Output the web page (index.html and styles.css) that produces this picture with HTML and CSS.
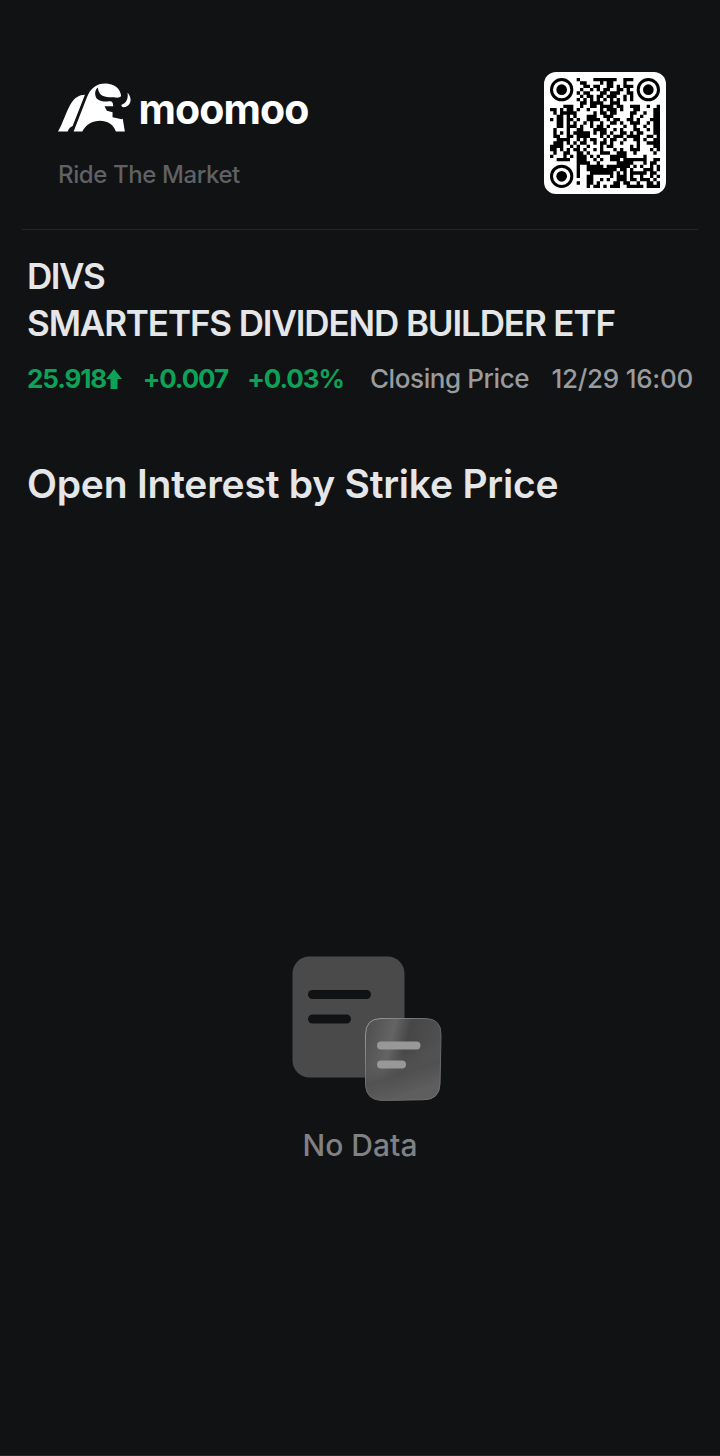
FILE: index.html
```html
<!DOCTYPE html>
<html lang="en">
<head>
    <meta charset="UTF-8" />
    <meta name="viewport" content="width=device-width, initial-scale=1.0" />
    <title>DIVS - Open Interest by Strike Price</title>
    <link rel="stylesheet" href="styles.css">
</head>
<body>
    <div class="share-page">
        <header class="header">
            <div class="brand">
                <div class="logo">
                    <svg class="bull" viewBox="24 24 221 147">
                        <path d="M24 170 C39 145 47 112 64 84 C74 68 88 59 105 59 L68 153 C60 156 56 162 53 170 Z" />
                        <path d="M71 170 L111 67 C121 39 141 25 166 25 C193 25 212 40 214 64 L214 128 L219 133 L225 170 L198 170 C186 126 116 126 97 170 Z" />
                        <path class="cut" d="M144 37 C134 45 133 60 141 71 C149 79 165 80 181 79 C187 79 190 84 190 94 L164 94 L171 107 L188 112 L188 127 L216 133 L221 98 L232 60 L217 52 C216 64 211 68 202 68 C190 65 173 69 160 63 C149 58 145 48 144 37 Z" />
                        <path d="M233 53 C241 61 246 76 239 86 C235 93 229 96 220 97 C215 94 214 92 215 89 C230 84 236 70 233 53 Z" />
                    </svg>
                    <span class="wordmark">moomoo</span>
                </div>
                <div class="slogan">Ride The Market</div>
            </div>
            <div class="qr">
                <svg viewBox="0 0 33 33">
                    <path id="qrModules" />
                    <g class="finder">
                        <circle cx="3.5" cy="3.5" r="3.05" />
                        <circle cx="29.5" cy="3.5" r="3.05" />
                        <circle cx="3.5" cy="29.5" r="3.05" />
                    </g>
                    <circle cx="3.5" cy="3.5" r="1.6" />
                    <circle cx="29.5" cy="3.5" r="1.6" />
                    <circle cx="3.5" cy="29.5" r="1.6" />
                </svg>
            </div>
        </header>

        <section class="quote">
            <div class="name symbol">DIVS</div>
            <div class="name">SMARTETFS DIVIDEND BUILDER ETF</div>
            <div class="price-row">
                <div class="price">
                    <span class="last">25.918</span>
                    <svg class="arrow" viewBox="0 0 16 20"><path d="M8 0 L16 10 H11.500 V20 H4.500 V10 H0 Z" /></svg>
                </div>
                <span class="change">+0.007</span>
                <span class="percent">+0.03%</span>
                <span class="status">Closing Price</span>
                <span class="time">12/29 16:00</span>
            </div>
        </section>

        <h1 class="title">Open Interest by Strike Price</h1>

        <div class="empty">
            <svg class="empty-icon" viewBox="0 0 150 146">
                <defs>
                    <linearGradient id="card" x1="0" y1="0" x2="1" y2="0.25">
                        <stop offset="0" stop-color="#4e4e4e" />
                        <stop offset="0.38" stop-color="#646464" />
                        <stop offset="0.58" stop-color="#474747" />
                        <stop offset="1" stop-color="#505050" />
                    </linearGradient>
                    <linearGradient id="shade" x1="0" y1="0" x2="0.3" y2="1">
                        <stop offset="0.5" stop-color="#5a5a5a" stop-opacity="0" />
                        <stop offset="0.75" stop-color="#505050" stop-opacity="0.9" />
                        <stop offset="1" stop-color="#5e5e5e" />
                    </linearGradient>
                    <linearGradient id="edge" x1="0" y1="0" x2="1" y2="1">
                        <stop offset="0" stop-color="#a0a0a0" />
                        <stop offset="0.5" stop-color="#606060" />
                        <stop offset="1" stop-color="#737373" />
                    </linearGradient>
                </defs>
                <rect x="0.500" y="0.500" width="112" height="121" rx="17" fill="#4a4a4a" />
                <rect x="16" y="34" width="63" height="9" rx="4.500" fill="#101214" />
                <rect x="16" y="58.500" width="43" height="9" rx="4.500" fill="#101214" />
                <path d="M89 62.500 H133 Q149.500 62.500 149 79 L148 128 Q147.500 143.500 132 143.700 L91 144.500 Q73.500 144.500 73.500 128 V79 Q73.500 62.500 89 62.500 Z" fill="url(#card)" />
                <path d="M89 62.500 H133 Q149.500 62.500 149 79 L148 128 Q147.500 143.500 132 143.700 L91 144.500 Q73.500 144.500 73.500 128 V79 Q73.500 62.500 89 62.500 Z" fill="url(#shade)" stroke="url(#edge)" />
                <rect x="85" y="85.500" width="43.500" height="8" rx="4" fill="#989898" />
                <rect x="85" y="104.500" width="29" height="8" rx="4" fill="#989898" />
            </svg>
            <div class="empty-text">No Data</div>
        </div>
    </div>

    <script>
        // one string per row, # is a dark module; the round finders are drawn in the svg
        const rows = [
            "........#....#######..###........",
            ".........##....#.##...#..........",
            "..........##.##..##.#.###........",
            ".........#..#.#.##..##.#.........",
            "........#.##...##.###..##........",
            ".........#.##.##.###..#.#........",
            "........#.#.#.#.#.#.#.#.#........",
            ".........##.####..###............",
            "....###..#..##.####.##..###..#..#",
            "##.#.##.#..#...#.###.#...##....##",
            ".#.#####.....#.##.##....##..#..##",
            "..##.#.#...###..###.....#..#...##",
            "#.##.##.#..####..#.##..##.#...###",
            "..##.#.#..#.#..#..##.#..###..#.##",
            "..##.###.#..#.##.#....#..#..#..##",
            ".#...#..##...####..#.#...##..#.##",
            ".#.#.#.#####.#.##.#..##.#.##...##",
            ".##..##.####...#.#.###.####..##.#",
            "..####..#.#.##..#.##..#..##.#..##",
            ".###.#.#.##..#.##.#..#....#..####",
            "####..#.#..#...#.##.....#.#....##",
            "##.#.#.##.#..#.#...#.#..###...#.#",
            ".#..##..##.#...###..###..#.....#.",
            "#...#.#.###.#.#...#####.....#....",
            "..####..###..#.#..###.#######..##",
            "........####..#.....#####...#.##.",
            "........#..#####.#######.#.#..#.#",
            "........#..#########.##.#...###.#",
            "........#...#######.#.#.#####.##.",
            "........#..##.....#.###.#..#..#.#",
            "...........##..#.#..###.##.###.#.",
            "........#..##.#....##.##..#..##.#",
            "...........#.##.#.###..#####.####"
        ];

        let d = "";
        rows.forEach((row, y) => {
            for (const run of row.matchAll(/#+/g)) {
                const w = run[0].length;
                d += `M${run.index} ${y}h${w}v1h-${w}z`;
            }
        });
        document.getElementById("qrModules").setAttribute("d", d);
    </script>
</body>
</html>
```
FILE: styles.css
```css
* {
    box-sizing: border-box;
}
body {
    margin: 0;
    background-color: #101214;
    font-family: Inter, "Liberation Sans", sans-serif;
    font-weight: 500;
    color: #e5e6e8;
    white-space: nowrap;
}
.share-page {
    display: flex;
    flex-direction: column;
    width: 720px;
    height: 1456px;
    border-bottom: 1px solid #222426;
}
.header {
    display: flex;
    justify-content: space-between;
    align-items: flex-start;
    height: 230px;
    margin: 0 22px;
    padding: 72px 32px 0 36px;
    border-bottom: 1px solid #25272a;
}
.logo {
    display: flex;
    align-items: flex-start;
    height: 60px;
    padding-top: 11px;
}
.bull {
    width: 73.500px;
    height: 49px;
    fill: #fff;
}
.bull .cut {
    fill: #101214;
}
.wordmark {
    margin-left: 7px;
    font-size: 41px;
    line-height: 52px;
    font-weight: 700;
    letter-spacing: -0.900px;
    color: #fff;
}
.slogan {
    margin-top: 27px;
    font-size: 24px;
    line-height: 32px;
    letter-spacing: -0.400px;
    color: #5f6163;
}
.qr {
    width: 122px;
    height: 122px;
    padding: 6px;
    background-color: #fff;
    border-radius: 12px;
}
.qr svg {
    display: block;
    width: 110px;
    height: 110px;
}
.finder {
    fill: none;
    stroke: #000;
    stroke-width: 0.900;
}
.quote {
    padding: 23px 27px 0 27px;
}
.name {
    font-size: 35px;
    line-height: 47px;
    font-weight: 600;
    letter-spacing: -1.120px;
}
.symbol {
    letter-spacing: -1.500px;
}
.price-row {
    display: flex;
    align-items: center;
    height: 38px;
    margin-top: 13px;
    font-size: 26px;
    line-height: 38px;
    color: #9a9b9d;
}
.price {
    display: flex;
    align-items: center;
    width: 116px;
}
.last,
.change,
.percent {
    font-weight: 700;
    color: #0ea158;
    letter-spacing: -1.100px;
}
.change {
    width: 105px;
}
.percent {
    width: 122px;
}
.status {
    width: 182px;
    letter-spacing: -0.400px;
    margin-left: 1px;
}
.time {
    letter-spacing: -0.250px;
}
.arrow {
    width: 16px;
    height: 20px;
    fill: #0ea158;
}
.title {
    margin: 58px 27px 0;
    font-size: 39px;
    line-height: 56px;
    font-weight: 600;
    letter-spacing: -0.220px;
}
.empty {
    display: flex;
    flex-direction: column;
    align-items: center;
    margin-top: 444px;
}
.empty-icon {
    width: 150px;
    height: 146px;
    margin-left: 14px;
}
.empty-text {
    margin-top: 23px;
    font-size: 30px;
    line-height: 40px;
    color: #7f8185;
}
```
